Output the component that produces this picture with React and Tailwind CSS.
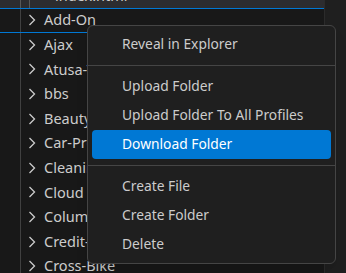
import React from 'react';

const folders = [
  'Add-On',
  'Ajax',
  'Atusa-Travel',
  'bbs',
  'Beauty-Salon',
  'Car-Pro',
  'Cleaning',
  'Cloud',
  'Columns',
  'Credit-Card',
  'Cross-Bike',
];

const Chevron = () => (
  <svg width="16" height="16" viewBox="0 0 16 16" className="shrink-0">
    <path d="M5.5 3 L10.5 8 L5.5 13" fill="none" stroke="#cccccc" strokeWidth="1.3" />
  </svg>
);

const MenuItem = ({ label, active }) => (
  <div
    className={
      'h-[29px] flex items-center pl-[30px] rounded-[4px] ' +
      (active ? 'bg-[#0078d4] text-white' : 'text-[#cccccc]')
    }
  >
    {label}
  </div>
);

const Separator = () => (
  <div className="h-[13px] flex items-center -mx-[4px]">
    <div className="h-px w-full bg-[#454545]" />
  </div>
);

const App = () => {
  return (
    <div
      className="relative w-[346px] h-[273px] overflow-hidden bg-[#1f1f1f] flex text-[14.5px]"
      style={{ fontFamily: '"Noto Sans", "Open Sans", sans-serif' }}
    >
      {/* Explorer tree */}
      <div className="w-[325px] h-full bg-[#181818] border-r border-[#2b2b2b] relative">
        <div className="-mt-[16.6px]">
          {/* partially visible file row */}
          <div className="h-[24.6px] bg-[#2c2c2f] flex items-center relative">
            <div className="absolute left-[20px] top-0 bottom-0 w-px bg-[#585858]" />
            <div className="absolute left-[29px] top-0 bottom-0 w-px bg-[#585858]" />
            <span className="ml-[38px] w-[14px] text-[#e37933] text-[11px] leading-none">&lt;&gt;</span>
            <span className="ml-[3px] text-[#cccccc]">index.html</span>
          </div>

          {folders.map((name, i) => (
            <div
              key={name}
              className={
                'h-[24.6px] flex items-center relative ' +
                (i === 0 ? 'border-y border-[#0078d4]' : '')
              }
            >
              <div className="absolute left-[20px] top-0 bottom-0 w-px bg-[#404040]" />
              <div className="ml-[24px]">
                <Chevron />
              </div>
              <span className="ml-[4px] text-[#cccccc] whitespace-nowrap">{name}</span>
            </div>
          ))}
        </div>
      </div>

      {/* Context menu */}
      <div className="absolute left-[87px] top-[25px] w-[249px] bg-[#1f1f1f] border border-[#454545] rounded-[6px] px-[4px] py-[4px] shadow-lg text-[13.8px] whitespace-nowrap">
        <MenuItem label="Reveal in Explorer" />
        <Separator />
        <MenuItem label="Upload Folder" />
        <MenuItem label="Upload Folder To All Profiles" />
        <MenuItem label="Download Folder" active />
        <Separator />
        <MenuItem label="Create File" />
        <MenuItem label="Create Folder" />
        <MenuItem label="Delete" />
      </div>
    </div>
  );
};

export default App;
